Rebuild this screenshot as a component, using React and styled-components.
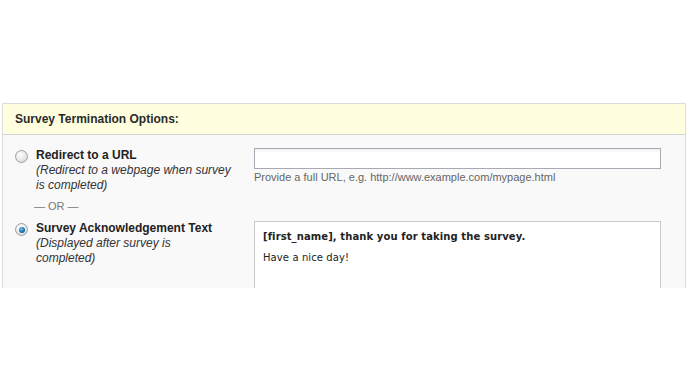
import React from "react";
import styled, { createGlobalStyle } from "styled-components";

const Global = createGlobalStyle`
  html, body {
    margin: 0;
    padding: 0;
    background: #fff;
  }
  body {
    font-family: "Liberation Sans", Arial, sans-serif;
  }
`;

const Page = styled.div`
  padding: 103px 4px 0 2px;
`;

const Panel = styled.div`
  height: 184px;
  overflow: hidden;
  border: 1px solid #dcdcdc;
  border-bottom: none;
  background: #f9f9f9;
`;

const Header = styled.div`
  height: 30px;
  display: flex;
  align-items: center;
  padding-left: 12px;
  background: #ffffe0;
  border-bottom: 1px solid #d4d4d4;
  font-size: 12px;
  font-weight: bold;
  color: #2a2a2a;
`;

const Body = styled.div`
  padding: 13px 0 0 12px;
`;

const Row = styled.div`
  display: grid;
  grid-template-columns: 21px 218px 407px;
  align-items: start;
`;

const Radio = styled.span`
  width: 11px;
  height: 11px;
  margin-top: 2px;
  border-radius: 50%;
  border: 1px solid #a0a0a0;
  background: radial-gradient(circle at 40% 35%, #ffffff 0%, #e4e4e4 60%, #c8c8c8 100%);
  display: flex;
  align-items: center;
  justify-content: center;
  &::after {
    content: "";
    display: ${(p) => (p.checked ? "block" : "none")};
    width: 6px;
    height: 6px;
    border-radius: 50%;
    background: radial-gradient(circle at 40% 35%, #7cc4ee 0%, #1f79b4 50%, #0b3f6e 100%);
  }
`;

const Label = styled.div`
  font-size: 12px;
  line-height: 15px;
  color: #222;
  b {
    display: block;
  }
  i {
    color: #333;
  }
`;

const Field = styled.div`
  display: flex;
  flex-direction: column;
`;

const Input = styled.div`
  height: 19px;
  border: 1px solid #a9a9b4;
  background: linear-gradient(#f0f0f3, #fff 4px);
`;

const Hint = styled.div`
  margin-top: 2px;
  font-size: 11px;
  color: #666;
`;

const Or = styled.div`
  padding: 6px 0 8px 19px;
  font-size: 11px;
  line-height: 14px;
  color: #777;
`;

const TextArea = styled.div`
  height: 80px;
  border: 1px solid #c8c8c8;
  background: #fff;
  padding: 9px 8px;
  font-family: "DejaVu Sans", Verdana, sans-serif;
  font-size: 10px;
  letter-spacing: 0.1px;
  color: #222;
  p {
    margin: 0 0 10px;
  }
`;

export default function App() {
  return (
    <>
      <Global />
      <Page>
        <Panel>
          <Header>Survey Termination Options:</Header>
          <Body>
            <Row>
              <Radio />
              <Label>
                <b>Redirect to a URL</b>
                <i>(Redirect to a webpage when survey<br />is completed)</i>
              </Label>
              <Field>
                <Input />
                <Hint>Provide a full URL, e.g. http://www.example.com/mypage.html</Hint>
              </Field>
            </Row>
            <Or>— OR —</Or>
            <Row>
              <Radio checked />
              <Label>
                <b>Survey Acknowledgement Text</b>
                <i>(Displayed after survey is<br />completed)</i>
              </Label>
              <TextArea>
                <p><b>[first_name], thank you for taking the survey.</b></p>
                <p>Have a nice day!</p>
              </TextArea>
            </Row>
          </Body>
        </Panel>
      </Page>
    </>
  );
}
